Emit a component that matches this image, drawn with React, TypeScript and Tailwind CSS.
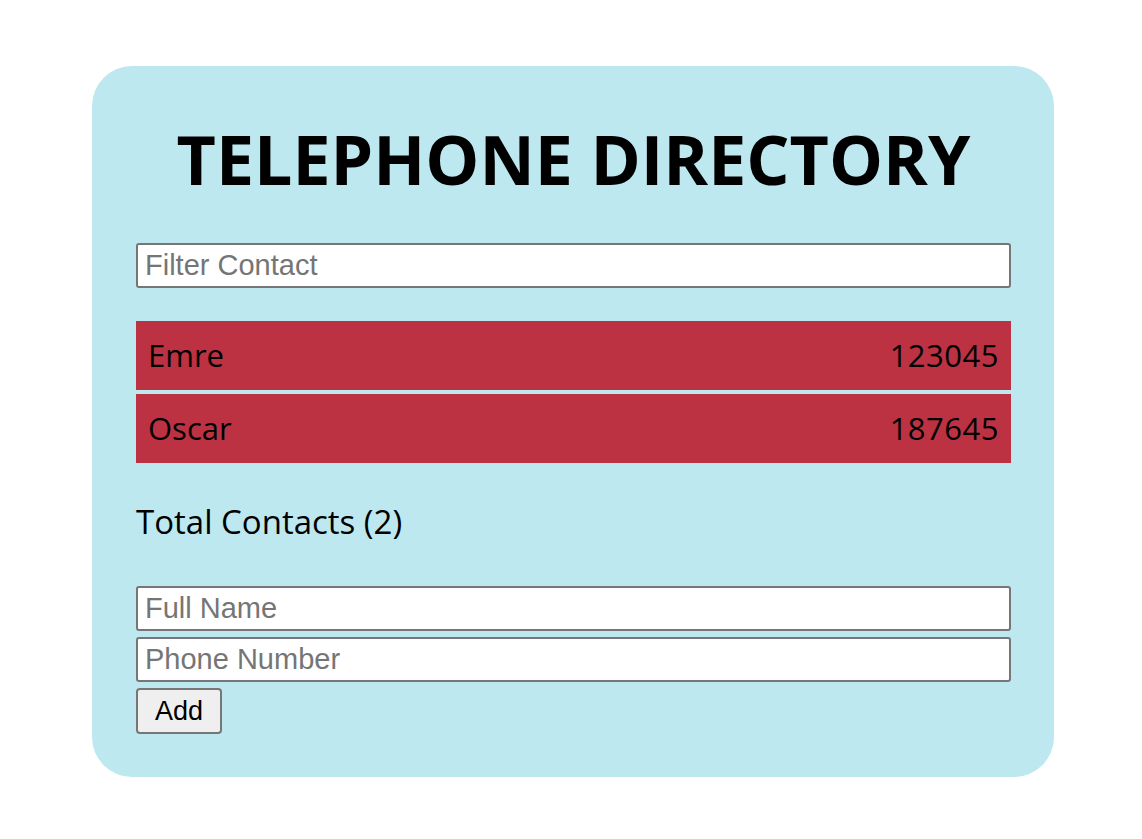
const contacts = [
  { name: 'Emre', phone: '123045' },
  { name: 'Oscar', phone: '187645' },
];

const inputClass =
  "block w-full h-[45px] px-[7px] bg-white border-2 border-[#767676] rounded-[3px] text-[29px] font-['Liberation_Sans',Arial,sans-serif] text-black placeholder:text-[#757575] outline-none";

export default function App() {
  return (
    <div className="min-h-screen bg-white pt-[66px]">
      <div className="ml-[92px] w-[962px] rounded-[40px] bg-[#bde8ef] pl-[44px] pr-[43px] pt-[59px] pb-[43px] font-['Open_Sans',sans-serif] text-black">
        {/* Title */}
        <h1 className="text-center text-[68px] font-bold leading-none">TELEPHONE DIRECTORY</h1>

        {/* Filter */}
        <div className="mt-[50px]">
          <input className={inputClass} placeholder="Filter Contact" />
        </div>

        {/* List */}
        <ul className="mt-[33px] flex flex-col gap-[4px]">
          {contacts.map((c) => (
            <li key={c.name} className="flex h-[69px] items-center justify-between bg-[#bc3242] px-[12px] text-[31px]">
              <span>{c.name}</span>
              <span className="tracking-[0.5px]">{c.phone}</span>
            </li>
          ))}
        </ul>

        <p className="mt-[42px] text-[33px] leading-none">Total Contacts ({contacts.length})</p>

        {/* Add form */}
        <form className="mt-[48px] flex flex-col gap-[6px]" onSubmit={(e) => e.preventDefault()}>
          <input className={inputClass} placeholder="Full Name" />
          <input className={inputClass} placeholder="Phone Number" />
          <div>
            <button
              type="submit"
              className="h-[46px] w-[86px] rounded-[4px] border-2 border-[#767676] bg-[#efefef] text-[27px] font-['Liberation_Sans',Arial,sans-serif] text-black"
            >
              Add
            </button>
          </div>
        </form>
      </div>
    </div>
  );
}
